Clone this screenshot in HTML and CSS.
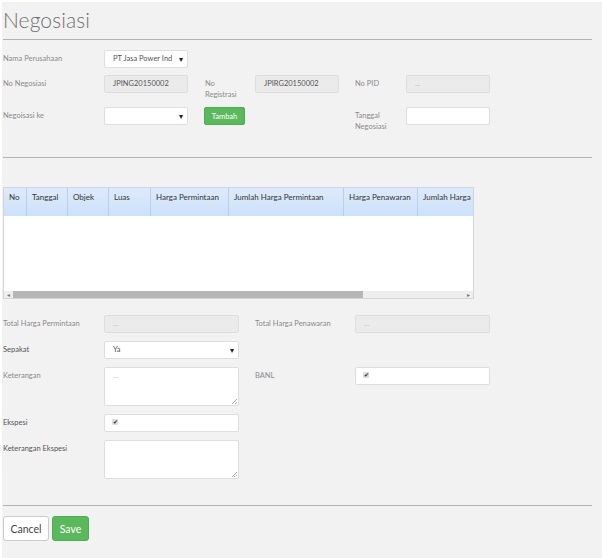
FILE: index.html
```
<!DOCTYPE html>
<html>
<head>
<meta charset="utf-8">
<link rel="stylesheet" href="styles.css">
</head>
<body>
<div class="page">
  <h1 class="title">Negosiasi</h1>
  <hr class="rule">

  <div class="top-grid">
    <div class="lbl">Nama Perusahaan</div>
    <div class="fld"><div class="inp sel">PT Jasa Power Ind<span class="arr">▾</span></div></div>
    <div class="fill"></div>

    <div class="lbl">No Negosiasi</div>
    <div class="fld"><div class="inp dis">JPING20150002</div></div>
    <div class="lbl">No<br>Registrasi</div>
    <div class="fld"><div class="inp dis">JPIRG20150002</div></div>
    <div class="lbl">No PID</div>
    <div class="fld"><div class="inp dis ph">...</div></div>

    <div class="lbl">Negoisasi ke</div>
    <div class="fld"><div class="inp sel"><span class="arr">▾</span></div></div>
    <div class="btn-cell"><button class="btn-green small">Tambah</button></div>
    <div class="lbl">Tanggal<br>Negosiasi</div>
    <div class="fld"><div class="inp"></div></div>
  </div>

  <hr class="rule rule2">

  <div class="grid-box">
    <div class="gh">
      <div class="gc" style="width:23px">No</div>
      <div class="gc" style="width:41px">Tanggal</div>
      <div class="gc" style="width:41px">Objek</div>
      <div class="gc" style="width:42px">Luas</div>
      <div class="gc" style="width:78px">Harga Permintaan</div>
      <div class="gc" style="width:115px">Jumlah Harga Permintaan</div>
      <div class="gc" style="width:74px">Harga Penawaran</div>
      <div class="gc last" style="width:55px">Jumlah Harga P</div>
    </div>
    <div class="gbody"></div>
    <div class="hscroll">
      <span class="sarr">◂</span>
      <div class="track"><div class="thumb"></div></div>
      <span class="sarr">▸</span>
    </div>
  </div>

  <div class="bottom-grid">
    <div class="lbl">Total Harga Permintaan</div>
    <div class="fld"><div class="inp dis ph">...</div></div>
    <div class="lbl">Total Harga Penawaran</div>
    <div class="fld"><div class="inp dis ph">...</div></div>

    <div class="lbl dark">Sepakat</div>
    <div class="fld"><div class="inp sel">Ya<span class="arr">▾</span></div></div>
    <div class="fill2"></div>

    <div class="lbl">Keterangan</div>
    <div class="fld"><div class="inp area ph">...<span class="grip"></span></div></div>
    <div class="lbl">BANL</div>
    <div class="fld"><div class="inp"><span class="chk">✔</span></div></div>

    <div class="lbl dark">Ekspesi</div>
    <div class="fld"><div class="inp"><span class="chk">✔</span></div></div>
    <div class="fill2"></div>

    <div class="lbl dark">Keterangan Ekspesi</div>
    <div class="fld"><div class="inp area"><span class="grip"></span></div></div>
    <div class="fill2"></div>
  </div>

  <hr class="rule rule3">

  <div class="actions">
    <button class="btn-white">Cancel</button>
    <button class="btn-green big">Save</button>
  </div>
</div>
</body>
</html>
```
FILE: styles.css
```
* { box-sizing: border-box; }
html, body { margin: 0; padding: 0; background: #ffffff; }
body {
  padding: 2px 0 0 2px;
  font-family: Lato, "Open Sans", sans-serif;
}
.page {
  background: #f2f2f2;
  height: 556px;
  padding-left: 1px;
  overflow: hidden;
}
.title {
  margin: 0;
  padding-top: 4px;
  font-size: 21px;
  line-height: 28px;
  font-weight: 300;
  color: #707070;
  letter-spacing: 0.1px;
}
.rule {
  border: 0;
  border-top: 1px solid #b4b4b4;
  margin: 5px 0 0 0;
  width: 589px;
}
.rule2 { margin-top: 25px; }
.rule3 { margin-top: 26px; }

.top-grid {
  display: grid;
  grid-template-columns: 101px 101px 50px 100px 51px 84px;
  row-gap: 7px;
  margin-top: 10px;
}
.fill { grid-column: span 4; }
.lbl {
  font-size: 7.5px;
  line-height: 11px;
  color: #8a8a8a;
  padding-top: 3px;
}
.lbl.dark { color: #555; }
.fld { display: block; }
.inp {
  position: relative;
  width: 84px;
  height: 18px;
  background: #fff;
  border: 1px solid #dedede;
  border-radius: 2px;
  font-size: 7.5px;
  line-height: 16px;
  color: #555;
  padding-left: 8px;
}
.inp.dis { background: #ebebeb; }
.ph { color: #bbb; }
.sel .arr {
  position: absolute;
  right: 4px;
  top: 0;
  font-size: 8px;
  color: #222;
}
.btn-cell { grid-column: span 2; }
.btn-green {
  display: block;
  background: #5cb85c;
  color: #fff;
  border: 1px solid #4cae4c;
  border-radius: 2px;
  font-family: Lato, sans-serif;
  padding: 0;
}
.btn-green.small {
  width: 41px;
  height: 18px;
  font-size: 7.5px;
  margin-left: -1px;
}

.grid-box {
  margin-top: 29px;
  width: 471px;
  border: 1px solid #cfd6de;
  background: #fff;
}
.gh {
  display: flex;
  height: 28px;
  background: linear-gradient(#ddeafb, #cde1f9);
  overflow: hidden;
  white-space: nowrap;
}
.gc {
  flex: none;
  font-size: 8px;
  color: #333;
  padding: 4px 0 0 5px;
  border-right: 1px solid #b9cfe8;
  overflow: hidden;
}
.gc.last { border-right: 0; }
.gbody { height: 75px; background: #fff; }
.hscroll {
  display: flex;
  align-items: center;
  height: 7px;
  background: #eeeeee;
}
.sarr {
  width: 9px;
  font-size: 6px;
  line-height: 7px;
  color: #777;
  text-align: center;
}
.track { flex: 1; height: 7px; }
.thumb { width: 350px; height: 7px; background: #b6b6b6; }

.bottom-grid {
  display: grid;
  grid-template-columns: 101px 151px 100px 135px;
  row-gap: 8px;
  margin-top: 16px;
}
.bottom-grid .inp { width: 135px; }
.fill2 { grid-column: span 2; }
.inp.area { height: 39px; }
.grip {
  position: absolute;
  right: 1px;
  bottom: 1px;
  width: 5px;
  height: 5px;
  background: linear-gradient(135deg, transparent 45%, #aaa 45%, #aaa 55%, transparent 55%, transparent 70%, #aaa 70%, #aaa 80%, transparent 80%);
}
.chk {
  display: inline-block;
  width: 6px;
  height: 6px;
  font-size: 6px;
  line-height: 6px;
  color: #222;
  background: #ddd;
  border-radius: 1px;
  margin-left: -1px;
  vertical-align: 1px;
  text-align: center;
}

.actions {
  display: flex;
  gap: 3px;
  margin-top: 10px;
}
.btn-white {
  width: 46px;
  height: 25px;
  background: #fff;
  border: 1px solid #ccc;
  border-radius: 3px;
  font-family: Lato, sans-serif;
  font-size: 10.5px;
  color: #444;
  padding: 0;
}
.btn-green.big {
  width: 37px;
  height: 25px;
  font-size: 10.5px;
  border-radius: 3px;
}
```
